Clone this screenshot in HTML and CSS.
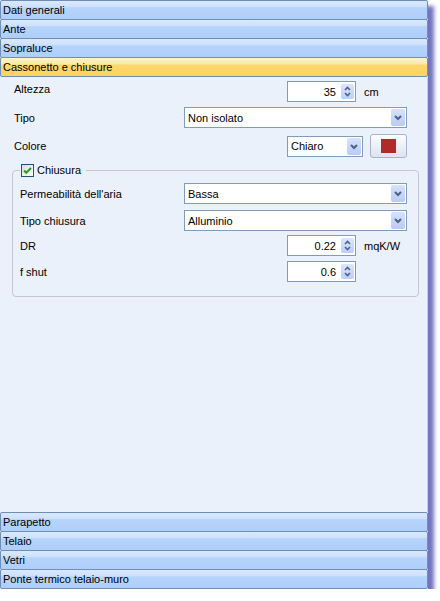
FILE: index.html
```html
<!DOCTYPE html>
<html lang="it">
<head>
<meta charset="utf-8">
<title>Cassonetto e chiusure</title>
<link rel="stylesheet" href="styles.css">
</head>
<body>
<div class="panel">
  <div class="bar">Dati generali</div>
  <div class="bar">Ante</div>
  <div class="bar">Sopraluce</div>
  <div class="bar bar-active">Cassonetto e chiusure</div>

  <div class="content">
    <div class="row row-1">
      <span class="label label-up">Altezza</span>
      <div class="spin"><span class="val">35</span><span class="spin-btn"><svg width="13" height="15" viewBox="0 0 13 15"><path d="M4 6 L6.5 3.5 L9 6" fill="none" stroke="#4d6185" stroke-width="1.6"/><path d="M4 9 L6.5 11.5 L9 9" fill="none" stroke="#4d6185" stroke-width="1.6"/></svg></span></div>
      <span class="unit">cm</span>
    </div>
    <div class="row row-2">
      <span class="label">Tipo</span>
      <div class="select select-wide"><span class="txt">Non isolato</span><span class="dd"><svg width="14" height="17" viewBox="0 0 14 17"><path d="M4 7 L7 10 L10 7" fill="none" stroke="#4d6185" stroke-width="2"/></svg></span></div>
    </div>
    <div class="row row-3">
      <span class="label">Colore</span>
      <div class="select select-small"><span class="txt">Chiaro</span><span class="dd"><svg width="14" height="17" viewBox="0 0 14 17"><path d="M4 7 L7 10 L10 7" fill="none" stroke="#4d6185" stroke-width="2"/></svg></span></div>
      <div class="color-btn"><span class="swatch"></span></div>
    </div>

    <fieldset class="group">
      <legend class="legend"><span class="check"><svg width="11" height="11" viewBox="0 0 11 11"><path d="M2 5.5 L4.3 7.8 L9 3" fill="none" stroke="#21a121" stroke-width="2"/></svg></span><span>Chiusura</span></legend>
      <div class="grow">
        <span class="label">Permeabilità dell'aria</span>
        <div class="select select-wide"><span class="txt">Bassa</span><span class="dd"><svg width="14" height="17" viewBox="0 0 14 17"><path d="M4 7 L7 10 L10 7" fill="none" stroke="#4d6185" stroke-width="2"/></svg></span></div>
      </div>
      <div class="grow grow-2">
        <span class="label">Tipo chiusura</span>
        <div class="select select-wide"><span class="txt">Alluminio</span><span class="dd"><svg width="14" height="17" viewBox="0 0 14 17"><path d="M4 7 L7 10 L10 7" fill="none" stroke="#4d6185" stroke-width="2"/></svg></span></div>
      </div>
      <div class="grow grow-3">
        <span class="label">DR</span>
        <div class="spin"><span class="val">0.22</span><span class="spin-btn"><svg width="13" height="15" viewBox="0 0 13 15"><path d="M4 6 L6.5 3.5 L9 6" fill="none" stroke="#4d6185" stroke-width="1.6"/><path d="M4 9 L6.5 11.5 L9 9" fill="none" stroke="#4d6185" stroke-width="1.6"/></svg></span></div>
        <span class="unit">mqK/W</span>
      </div>
      <div class="grow grow-4">
        <span class="label">f shut</span>
        <div class="spin"><span class="val">0.6</span><span class="spin-btn"><svg width="13" height="15" viewBox="0 0 13 15"><path d="M4 6 L6.5 3.5 L9 6" fill="none" stroke="#4d6185" stroke-width="1.6"/><path d="M4 9 L6.5 11.5 L9 9" fill="none" stroke="#4d6185" stroke-width="1.6"/></svg></span></div>
        <span class="unit"></span>
      </div>
    </fieldset>
  </div>

  <div class="bar bar-first">Parapetto</div>
  <div class="bar">Telaio</div>
  <div class="bar">Vetri</div>
  <div class="bar">Ponte termico telaio-muro</div>
</div>
</body>
</html>
```

FILE: styles.css
```css
html, body {
  margin: 0;
  padding: 0;
  background: #ffffff;
}

body {
  font-family: "Liberation Sans", Arial, sans-serif;
  font-size: 11px;
  color: #000000;
}

.panel {
  width: 428px;
  height: 589px;
  display: flex;
  flex-direction: column;
  background: #ebf1fb;
  box-shadow: 6px 6px 4px rgba(90, 90, 180, 0.85);
}

.bar {
  flex: none;
  height: 20px;
  box-sizing: border-box;
  margin-top: -1px;
  border: 1px solid #6f8fb9;
  border-radius: 2px;
  padding-left: 2px;
  line-height: 18px;
  white-space: nowrap;
  background: linear-gradient(#dae8fd 0%, #cfe2fc 30%, #b6d4fb 38%, #aecffa 100%);
}

.bar:first-child,
.bar-first {
  margin-top: 0;
}

.bar-active {
  background: linear-gradient(#fff3cf 0%, #ffe9aa 30%, #fdd76c 42%, #fbd35c 100%);
}

.content {
  flex: 1;
  box-sizing: border-box;
  padding: 4px 8px 0 12px;
  border-right: 1px solid #c6cfdc;
}

.row {
  display: flex;
  align-items: center;
  height: 21px;
  padding: 0 12px 0 2px;
}

.row-2 {
  margin-top: 5px;
}

.row-3 {
  margin-top: 6px;
  height: 24px;
}

.label {
  flex: 1;
  white-space: nowrap;
}

.label-up {
  align-self: flex-start;
  line-height: 17px;
}

.spin {
  width: 69px;
  height: 21px;
  box-sizing: border-box;
  border: 1px solid #7f9db9;
  background: #ffffff;
  display: flex;
  align-items: center;
  justify-content: flex-end;
}

.spin .val {
  padding-right: 5px;
}

.spin-btn {
  width: 13px;
  height: 15px;
  margin-right: 1px;
  border-radius: 2px;
  background: linear-gradient(#dbe5fd, #bccff8);
  display: flex;
}

.unit {
  width: 51px;
  box-sizing: border-box;
  padding-left: 8px;
  white-space: nowrap;
}

.select {
  height: 21px;
  box-sizing: border-box;
  border: 1px solid #7f9db9;
  background: #ffffff;
  display: flex;
  align-items: center;
  padding-left: 3px;
}

.select .txt {
  flex: 1;
  white-space: nowrap;
}

.select-wide {
  width: 223px;
}

.select-small {
  width: 76px;
}

.dd {
  width: 14px;
  height: 17px;
  margin-right: 1px;
  border-radius: 2px;
  background: linear-gradient(#d6e2fd, #b8cbf6);
  display: flex;
}

.color-btn {
  width: 37px;
  height: 24px;
  box-sizing: border-box;
  margin-left: 7px;
  border: 1px solid #a3b3cb;
  border-radius: 3px;
  background: linear-gradient(#fbfcfe, #dde4ef);
  display: flex;
  align-items: center;
  justify-content: center;
}

.swatch {
  width: 15px;
  height: 14px;
  background: #b02a2a;
}

.group {
  margin: 6px 0 0 0;
  padding: 6px 11px 14px 7px;
  border: 1px solid #c3c8cf;
  border-radius: 4px;
  min-width: 0;
}

.legend {
  display: flex;
  align-items: center;
  gap: 3px;
  height: 13px;
  line-height: 13px;
  padding: 0 5px 0 1px;
}

.check {
  width: 13px;
  height: 13px;
  box-sizing: border-box;
  border: 1px solid #1c5180;
  background: linear-gradient(135deg, #dcdcd7, #ffffff);
  display: flex;
}

.grow {
  display: flex;
  align-items: center;
  height: 21px;
}

.grow-2 {
  margin-top: 6px;
}

.grow-3 {
  margin-top: 4px;
}

.grow-4 {
  margin-top: 5px;
}
```
